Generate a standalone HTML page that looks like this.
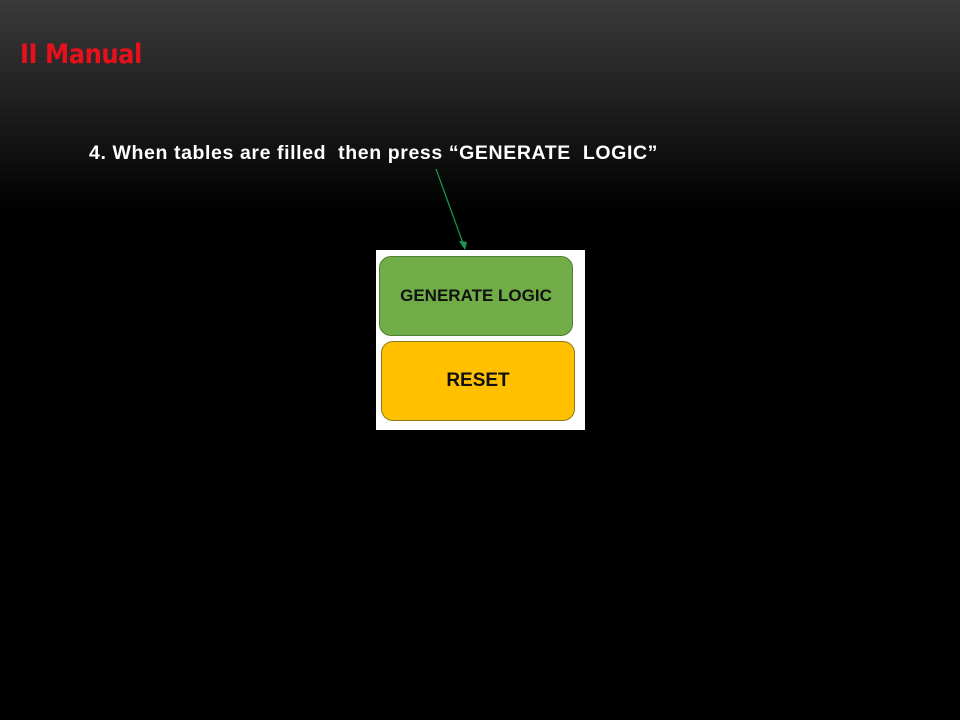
<!DOCTYPE html>
<html><head><style>
body{margin:0;width:960px;height:720px;overflow:hidden;background:linear-gradient(#3a3a3a 0px,#1a1a1a 120px,#000 210px,#000 720px);position:relative;font-family:"Liberation Sans",sans-serif}
.t{position:absolute;left:20px;top:39px;color:#e8101a;font-size:27px;font-weight:bold;font-family:"DejaVu Sans Condensed","Liberation Sans",sans-serif;letter-spacing:-0.5px}
.s{position:absolute;left:89px;top:142px;color:#fff;font-weight:bold;font-size:19.5px;letter-spacing:0.6px;white-space:nowrap}
.box{position:absolute;left:376px;top:250px;width:209px;height:180px;background:#fff}
.b{position:absolute;border-radius:12px;display:flex;align-items:center;justify-content:center;font-weight:bold;color:#111}
</style></head><body>
<div class="t">II Manual</div>
<div class="s">4. When tables are filled &nbsp;then press “GENERATE &nbsp;LOGIC”</div>
<svg style="position:absolute;left:0;top:0" width="960" height="720"><line x1="436" y1="169" x2="464" y2="246" stroke="#1a9a50" stroke-width="1.2"/><polygon points="459,241 467,242 465,250" fill="#1a9a50"/></svg>
<div class="box">
<div class="b" style="left:3px;top:6px;width:192px;height:78px;background:#70ad47;border:1px solid #507e32;font-size:17px">GENERATE LOGIC</div>
<div class="b" style="left:5px;top:91px;width:192px;height:78px;background:#ffc000;border:1px solid #8f7a1a;font-size:19px">RESET</div>
</div>
</body></html>
